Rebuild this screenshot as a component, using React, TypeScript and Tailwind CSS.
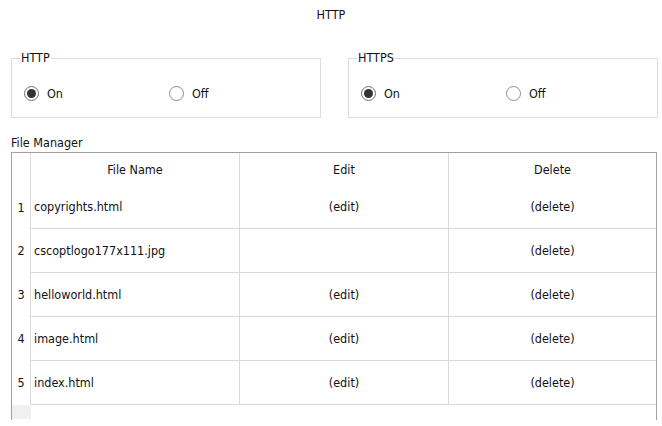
const files = [
  { name: "copyrights.html", edit: true },
  { name: "cscoptlogo177x111.jpg", edit: false },
  { name: "helloworld.html", edit: true },
  { name: "image.html", edit: true },
  { name: "index.html", edit: true },
];

function Radio({ checked, label }: { checked: boolean; label: string }) {
  return (
    <div className="flex items-center gap-[8px]">
      <span
        className={`flex h-[15px] w-[15px] items-center justify-center rounded-full border bg-white ${
          checked ? "border-[#6e6e6e]" : "border-[#8c8c8c]"
        }`}
      >
        {checked && <span className="h-[9px] w-[9px] rounded-full bg-[#333333]" />}
      </span>
      <span>{label}</span>
    </div>
  );
}

function Group({ title, on }: { title: string; on: boolean }) {
  return (
    <fieldset className="h-[67px] w-[310px] border border-[#dcdcdc] pl-[12px] pt-[21px]">
      <legend className="ml-[-4px] px-[1px] leading-[14px]">{title}</legend>
      <div className="grid grid-cols-[145px_1fr]">
        <Radio checked={on} label="On" />
        <Radio checked={!on} label="Off" />
      </div>
    </fieldset>
  );
}

export default function App() {
  return (
    <div
      className="h-[426px] w-[662px] overflow-hidden bg-white text-[12.5px] leading-[14px] text-[#111111]"
      style={{ fontFamily: '"DejaVu Sans Condensed", "DejaVu Sans", sans-serif', fontStretch: "condensed" }}
    >
      <div className="pt-[8px] text-center">HTTP</div>

      <div className="mt-[29px] flex justify-between pl-[11px] pr-[4px]">
        <Group title="HTTP" on={true} />
        <Group title="HTTPS" on={true} />
      </div>

      <div className="mt-[18px] pl-[11px]">File Manager</div>

      <div className="ml-[11px] mt-[2px] h-[268px] w-[646px] border-x border-t border-[#a0a0a0]">
        <div className="grid h-[33px] grid-cols-[19px_209px_209px_1fr]">
          <div className="border-r border-[#dadada]" />
          <div className="flex items-center justify-center border-r border-[#dadada]">File Name</div>
          <div className="flex items-center justify-center border-r border-[#dadada]">Edit</div>
          <div className="flex items-center justify-center">Delete</div>
        </div>
        {files.map((f, i) => (
          <div
            key={f.name}
            className={`grid grid-cols-[19px_209px_209px_1fr] ${i === 0 ? "h-[43px]" : "h-[44px]"}`}
          >
            <div className="flex items-center justify-center border-r border-[#dadada]">{i + 1}</div>
            <div className="flex items-center border-b border-r border-[#dadada] pl-[3px]">{f.name}</div>
            <div className="flex items-center justify-center border-b border-r border-[#dadada]">
              {f.edit ? "(edit)" : ""}
            </div>
            <div className="flex items-center justify-center border-b border-[#dadada]">(delete)</div>
          </div>
        ))}
        <div className="grid h-[14px] grid-cols-[19px_1fr]">
          <div className="bg-[#f0f0f0]" />
          <div />
        </div>
      </div>
    </div>
  );
}
